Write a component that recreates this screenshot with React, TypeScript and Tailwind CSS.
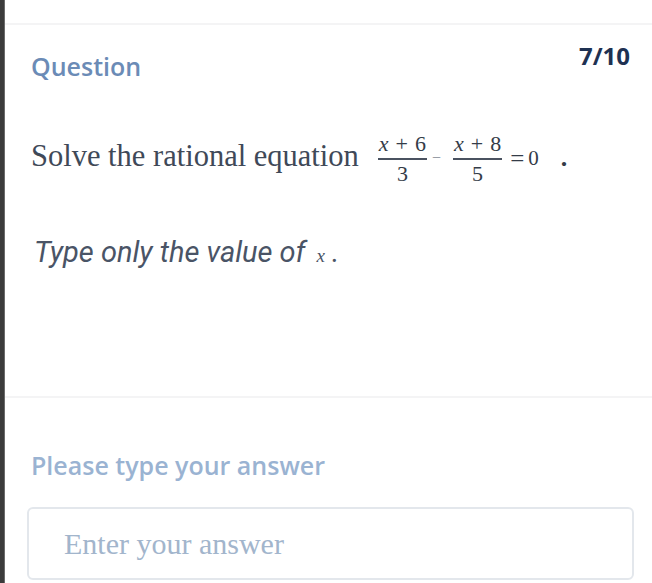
import React from "react";

const serif = { fontFamily: '"Liberation Serif", "Times New Roman", serif' };

function Frac({ num, den }: { num: React.ReactNode; den: React.ReactNode }) {
  return (
    <span className="inline-flex flex-col items-stretch text-[22px] text-[#343c48]" style={serif}>
      <span className="h-[22px] leading-[22px] text-center px-[1px] whitespace-nowrap">{num}</span>
      <span className="mt-[3px] h-[2px] bg-[#4a5260]" />
      <span className="mt-[3px] h-[22px] leading-[22px] text-center">{den}</span>
    </span>
  );
}

export default function App() {
  return (
    <div className="w-full h-[583px] flex bg-white overflow-hidden">
      <div className="w-[4px] bg-[#3b3b3b] shrink-0" />
      <div className="w-[1px] bg-[#6b6b6b] shrink-0" />
      <div className="flex-1 flex flex-col">
        <div className="h-[23px]" />
        <div className="h-[2px] bg-[#f4f4f5]" />
        <div className="flex justify-between items-start pl-[26px] pr-[22px]">
          <div
            className="mt-[24px] text-[25px] leading-[34px] font-semibold text-[#6b8bb6]"
            style={{ fontFamily: '"Open Sans", sans-serif' }}
          >
            Question
          </div>
          <div
            className="mt-[14px] text-[24px] leading-[33px] font-bold text-[#1e3152]"
            style={{ fontFamily: '"Open Sans", sans-serif' }}
          >
            7/10
          </div>
        </div>

        <div className="mt-[50px] pl-[26px] flex items-center text-[#3f4958]">
          <span className="text-[30.5px] leading-[35px] mb-[5px]" style={serif}>
            Solve the rational equation
          </span>
          <span className="ml-[19px]">
            <Frac
              num={
                <>
                  <i>x</i>
                  <span className="mx-[7px]">+</span>6
                </>
              }
              den="3"
            />
          </span>
          <span className="ml-[5px] text-[16px] text-[#8a909a] mb-[2px]" style={serif}>
            −
          </span>
          <span className="ml-[12px]">
            <Frac
              num={
                <>
                  <i>x</i>
                  <span className="mx-[7px]">+</span>8
                </>
              }
              den="5"
            />
          </span>
          <span className="ml-[8px] text-[25px] text-[#343c48] mb-[1px]" style={serif}>
            =
          </span>
          <span className="ml-[4px] text-[21px] text-[#343c48] mb-[1px]" style={serif}>
            0
          </span>
          <span className="ml-[22px] text-[26px] text-[#343c48] mb-[4px] font-bold" style={serif}>
            .
          </span>
        </div>

        <div
          className="mt-[50px] pl-[29px] text-[29px] leading-[34px] italic text-[#4a5466]"
          style={{ fontFamily: 'Roboto, sans-serif' }}
        >
          Type only the value of{" "}
          <span className="text-[19px] not-italic ml-[4px]" style={serif}>
            <i>x</i>
          </span>{" "}
          .
        </div>

        <div className="mt-[123px] h-[2px] bg-[#f4f4f5]" />

        <div
          className="mt-[50px] pl-[26px] text-[25px] leading-[34px] font-semibold text-[#9ab3d2]"
          style={{ fontFamily: '"Open Sans", sans-serif' }}
        >
          Please type your answer
        </div>

        <div className="mt-[25px] ml-[22px] mr-[18px]">
          <input
            type="text"
            placeholder="Enter your answer"
            className="w-full h-[73px] border-2 border-[#e3e7ec] rounded-[6px] pl-[35px] text-[30px] text-[#3f4958] placeholder:text-[#a2b5cc] outline-none bg-white"
            style={serif}
          />
        </div>
      </div>
    </div>
  );
}
